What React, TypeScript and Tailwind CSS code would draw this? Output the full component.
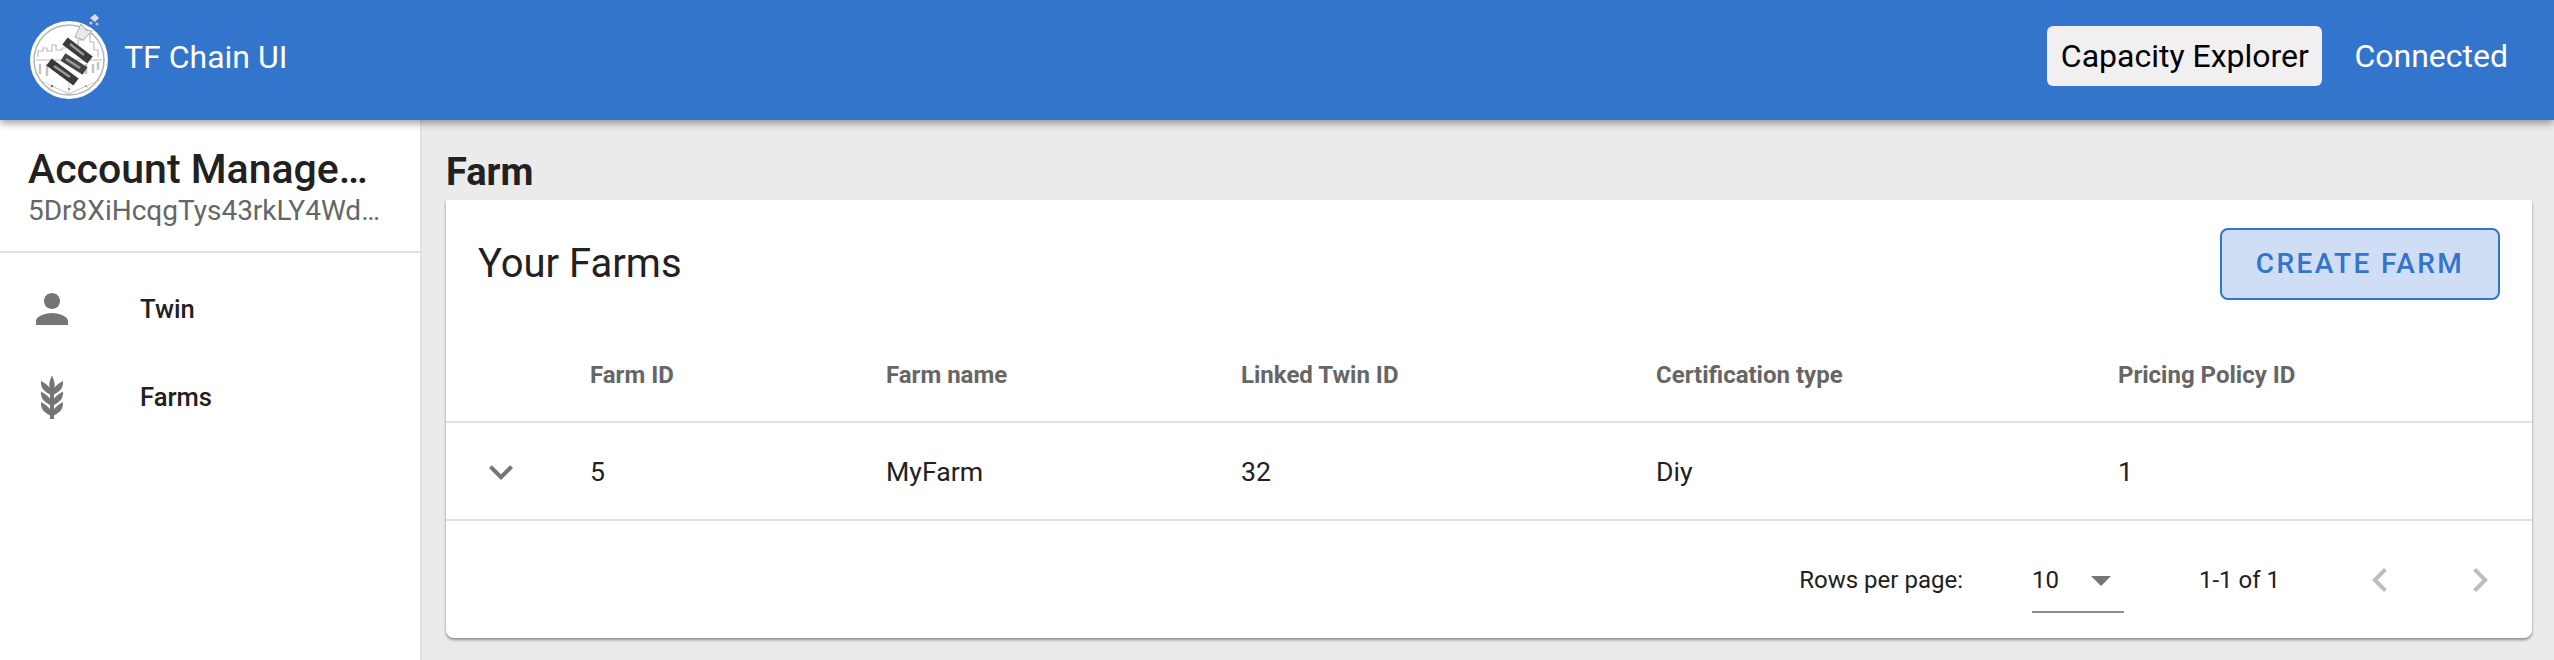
const font = "font-['Roboto',sans-serif]";

function Logo() {
  return (
    <svg className="h-[100px] w-[100px] shrink-0 blur-[0.6px]" viewBox="0 0 100 100">
      <circle cx="49" cy="50" r="39" fill="#fff" />
      <circle cx="49" cy="50" r="35" fill="none" stroke="#b5b5b5" strokeWidth="1.5" />
      {/* skyline */}
      <path
        d="M18 47v-6h5v-3h4v3h5v-6h4v5h6v-2h4M58 38v-8h6v-6h6v8h4v8h4v7M16 50h66"
        fill="none"
        stroke="#bdbdbd"
        strokeWidth="1.2"
      />
      <path d="M20 54v10M27 54v12M66 54v10M73 54v9M78 52v8" stroke="#c4c4c4" strokeWidth="2.5" />
      {/* network at the bottom */}
      <path
        d="M19 70l13 6 17 8 17-8 14-6M32 76l-6 6M32 76l17 8 0-16M66 76l-17 8M66 76l6 6"
        fill="none"
        stroke="#c9c9c9"
        strokeWidth="0.8"
      />
      <circle cx="32" cy="76" r="1" fill="#444" />
      <circle cx="49" cy="79" r="1" fill="#777" />
      <circle cx="66" cy="76" r="1" fill="#999" />
      {/* bars */}
      <path d="M45 31l25 19" stroke="#3a3a3a" strokeWidth="9" />
      <path d="M43 47l22 14" stroke="#444" strokeWidth="9" />
      <path d="M29 52l27 20" stroke="#3a3a3a" strokeWidth="9" />
      <path d="M50 34l14 11M46 49l14 9M34 56l16 11" stroke="#999" strokeWidth="2.5" />
      {/* star and dots at the top */}
      <path d="M55 27l6-13 5 6 6 1-9 9z" fill="#e8e8e8" stroke="#aaa" strokeWidth="1" />
      <path d="M70 8l5-4 4 4-4 4z" fill="#ddd" />
      <circle cx="71" cy="13" r="1.6" fill="#ccc" />
      <circle cx="77" cy="14" r="1.6" fill="#bbb" />
    </svg>
  );
}

function GrayIcon({ d, className }: { d: string; className?: string }) {
  return (
    <svg className={`h-12 w-12 shrink-0 ${className ?? "fill-[#757575]"}`} viewBox="0 0 24 24">
      <path d={d} />
    </svg>
  );
}

const personPath =
  "M12 12c2.21 0 4-1.79 4-4s-1.79-4-4-4-4 1.79-4 4 1.79 4 4 4zm0 2c-2.67 0-8 1.34-8 4v2h16v-2c0-2.66-5.33-4-8-4z";
const barleyPath =
  "M7.33,18.33C6.5,17.17 6.5,15.83 6.5,14.5C8.17,15.5 9.83,16.5 10.67,17.67L11,18.23V15.95C9.5,15.05 8.08,14.13 7.33,13.08C6.5,11.92 6.5,10.58 6.5,9.25C8.17,10.25 9.83,11.25 10.67,12.42L11,13V10.7C9.5,9.8 8.08,8.88 7.33,7.83C6.5,6.67 6.5,5.33 6.5,4C8.17,5 9.83,6 10.67,7.17C10.77,7.31 10.86,7.46 10.94,7.62C10.77,7 10.66,6.42 10.65,5.82C10.64,4.31 11.3,2.76 11.96,1.21C12.65,2.69 13.34,4.18 13.35,5.69C13.36,6.32 13.25,6.96 13.07,7.59C13.15,7.45 13.23,7.31 13.33,7.17C14.17,6 15.83,5 17.5,4C17.5,5.33 17.5,6.67 16.67,7.83C15.92,8.88 14.5,9.8 13,10.7V13L13.33,12.42C14.17,11.25 15.83,10.25 17.5,9.25C17.5,10.58 17.5,11.92 16.67,13.08C15.92,14.13 14.5,15.05 13,15.95V18.23L13.33,17.67C14.17,16.5 15.83,15.5 17.5,14.5C17.5,15.83 17.5,17.17 16.67,18.33C15.92,19.38 14.5,20.3 13,21.2V23H11V21.2C9.5,20.3 8.08,19.38 7.33,18.33Z";
const downPath = "M7.41 8.59L12 13.17l4.59-4.58L18 10l-6 6-6-6 1.41-1.41z";
const leftPath = "M15.41 16.59L10.83 12l4.58-4.59L14 6l-6 6 6 6 1.41-1.41z";
const rightPath = "M8.59 16.59L13.17 12 8.59 7.41 10 6l6 6-6 6-1.41-1.41z";

const columns = "grid grid-cols-[144px_296px_355px_415px_462px_1fr]";

export default function App() {
  return (
    <div className={`${font} flex h-[660px] flex-col overflow-hidden bg-[#ebebeb] text-[#212121]`}>
      {/* Header */}
      <header className="relative z-10 flex h-[120px] shrink-0 items-center justify-between bg-[#3374cc] pl-5 pr-[46px] text-white shadow-[0_3px_8px_rgba(0,0,0,0.4)]">
        <div className="flex items-center gap-[4px]">
          <Logo />
          <span className="pb-[6px] text-[32px] leading-none">TF Chain UI</span>
        </div>
        <div className="flex items-center gap-[32px] pb-[8px]">
          <button className="flex h-[60px] w-[275px] items-center justify-center rounded-[6px] bg-[#f1eff0] text-[32px] text-black">
            Capacity Explorer
          </button>
          <span className="text-[32px]">Connected</span>
        </div>
      </header>

      <div className="flex min-h-0 flex-1">
        {/* Sidebar */}
        <aside className="flex w-[422px] shrink-0 flex-col border-r-2 border-[#e2e2e2] bg-white">
          <div className="h-[133px] border-b-2 border-[#e0e0e0] pl-[28px] pr-[40px] pt-[25px]">
            <div className="truncate text-[41px] leading-[48px] font-medium">Account Management</div>
            <div className="truncate text-[28px] leading-[36px] text-[#666]">
              5Dr8XiHcqgTys43rkLY4WdFpPYgnhhRXGWbY6Fi8tJ3H2JqB
            </div>
          </div>
          <nav className="flex flex-col pt-[12px]">
            <div className="flex h-[88px] items-center pl-[28px] text-[25.6px] font-medium">
              <GrayIcon d={personPath} />
              <span className="ml-[64px]">Twin</span>
            </div>
            <div className="flex h-[88px] items-center pl-[28px] text-[25.6px] font-medium">
              <GrayIcon d={barleyPath} />
              <span className="ml-[64px]">Farms</span>
            </div>
          </nav>
        </aside>

        {/* Main */}
        <main className="flex-1 pl-[24px] pr-[22px] pt-[16px]">
          <h1 className="h-[64px] pt-[11px] text-[38px] leading-[50px] font-bold">Farm</h1>
          <section className="rounded-b-[8px] bg-white shadow-[0_2px_3px_rgba(0,0,0,0.4)]">
            <div className="flex h-[122px] items-center justify-between px-[32px] pt-[5px]">
              <h2 className="text-[40px] font-normal">Your Farms</h2>
              <button className="h-[72px] w-[280px] rounded-[8px] border-2 border-[#3374cc] bg-[#cfdef5] text-[28px] font-medium tracking-[2.4px] text-[#3374cc]">
                CREATE FARM
              </button>
            </div>

            {/* Table */}
            <div className={`${columns} h-[101px] items-center border-b-2 border-[#e0e0e0] pt-[7px] text-[24px] font-bold text-[#666]`}>
              <span />
              <span>Farm ID</span>
              <span>Farm name</span>
              <span>Linked Twin ID</span>
              <span>Certification type</span>
              <span>Pricing Policy ID</span>
            </div>
            <div className={`${columns} h-[98px] items-center border-b-2 border-[#e0e0e0] pt-[2px] text-[26.67px]`}>
              <span className="flex justify-start pl-[31px]">
                <GrayIcon d={downPath} />
              </span>
              <span>5</span>
              <span>MyFarm</span>
              <span>32</span>
              <span>Diy</span>
              <span>1</span>
            </div>

            {/* Pagination */}
            <div className="flex h-[117px] items-center justify-end pr-[28px] text-[24px]">
              <span>Rows per page:</span>
              <div className="ml-[69px] flex h-[66px] w-[92px] items-center border-b-2 border-[#8f8f8f] pt-[2px]">
                <span>10</span>
                <GrayIcon d="M7 10l5 5 5-5z" className="ml-[18px] fill-[#757575]" />
              </div>
              <span className="ml-[75px]">1-1 of 1</span>
              <GrayIcon d={leftPath} className="ml-[76px] fill-[#bdbdbd]" />
              <GrayIcon d={rightPath} className="ml-[52px] fill-[#bdbdbd]" />
            </div>
          </section>
        </main>
      </div>
    </div>
  );
}
